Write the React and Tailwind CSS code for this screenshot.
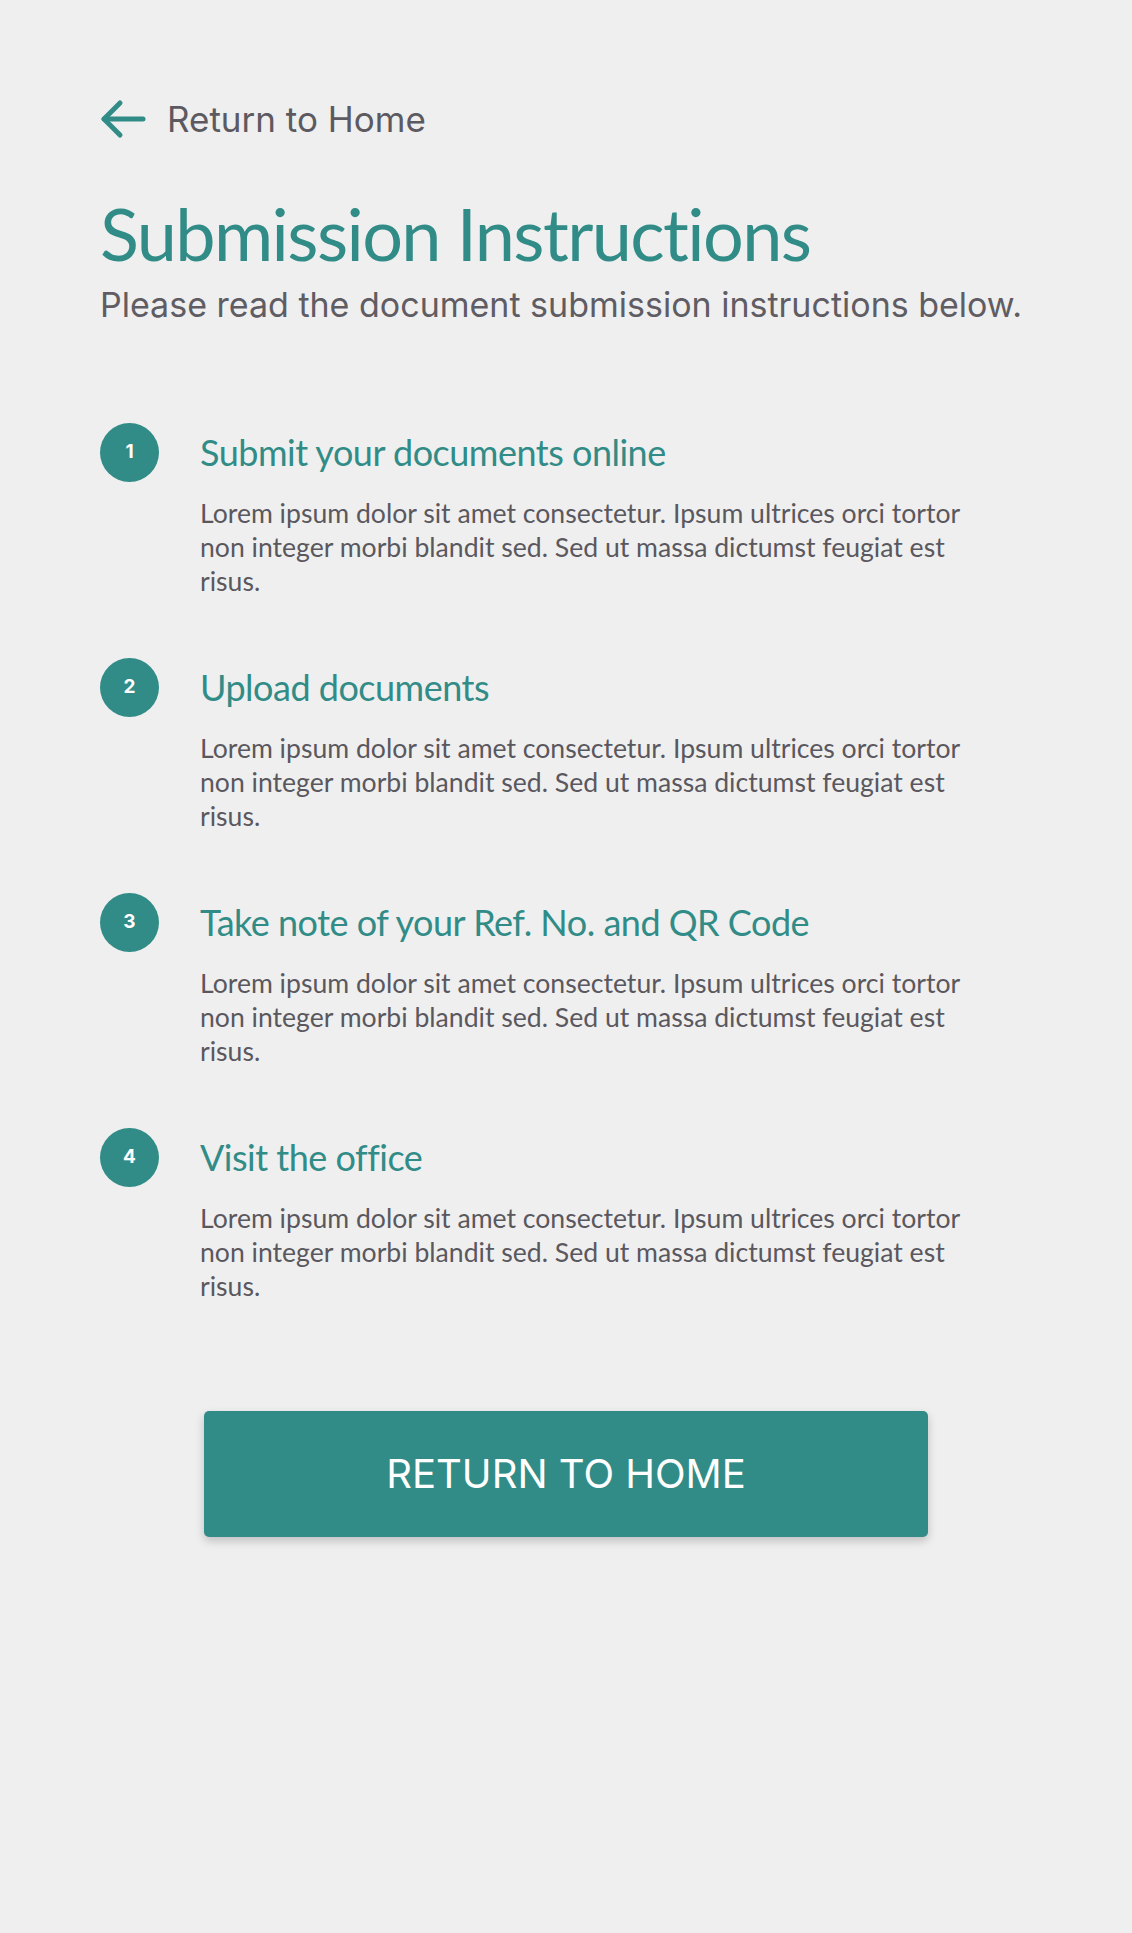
import React from "react";

const steps = [
  { n: 1, title: "Submit your documents online" },
  { n: 2, title: "Upload documents" },
  { n: 3, title: "Take note of your Ref. No. and QR Code" },
  { n: 4, title: "Visit the office" },
];

const lorem =
  "Lorem ipsum dolor sit amet consectetur. Ipsum ultrices orci tortor non integer morbi blandit sed. Sed ut massa dictumst feugiat est risus.";

const futura = "font-['Lato','Noto_Sans',sans-serif]";
const geo = "font-['Inter','Open_Sans',sans-serif]";

function Step({ n, title }) {
  return (
    <div className="flex items-start">
      <div className="w-[100px] shrink-0">
        <div
          className={`h-[59px] w-[59px] rounded-full bg-[#318c87] flex items-center justify-center text-white text-[19px] font-bold ${geo}`}
        >
          {n}
        </div>
      </div>
      <div className="min-w-0">
        <h2
          className={`text-[36px] leading-[59px] tracking-[-0.5px] text-[#318c87] ${futura}`}
        >
          {title}
        </h2>
        <p
          className={`mt-[14px] max-w-[790px] text-[26.6px] leading-[34px] text-[#5a585e] ${futura}`}
        >
          {lorem}
        </p>
      </div>
    </div>
  );
}

export default function App() {
  return (
    <div className="min-h-[1933px] bg-[#efefef] pl-[100px] pr-[40px] pt-[99px]">
      <a href="#" className="flex items-center gap-[21px] w-fit">
        <svg
          width="46"
          height="40"
          viewBox="0 0 46 40"
          fill="none"
          stroke="#318c87"
          strokeWidth="5"
          strokeLinecap="round"
          strokeLinejoin="round"
        >
          <path d="M43 20H4" />
          <path d="M20 4L4 20L20 36" />
        </svg>
        <span className={`text-[35px] leading-none text-[#5c5a60] ${geo}`}>
          Return to Home
        </span>
      </a>

      <h1
        className={`mt-[58px] text-[72px] leading-none tracking-[-1.6px] text-[#318c87] ${futura}`}
      >
        Submission Instructions
      </h1>
      <p className={`mt-[19px] text-[34px] leading-none text-[#5f5d63] ${geo}`}>
        Please read the document submission instructions below.
      </p>

      <div className="mt-[101px] flex flex-col gap-[60px]">
        {steps.map((s) => (
          <Step key={s.n} n={s.n} title={s.title} />
        ))}
      </div>

      <div className="mt-[108px] -ml-[100px] -mr-[40px] flex justify-center">
        <button
          className={`h-[126px] w-[724px] rounded-[5px] bg-[#318c87] text-white text-[40px] shadow-[0_4px_10px_rgba(0,0,0,0.2)] ${geo}`}
        >
          RETURN TO HOME
        </button>
      </div>
    </div>
  );
}
